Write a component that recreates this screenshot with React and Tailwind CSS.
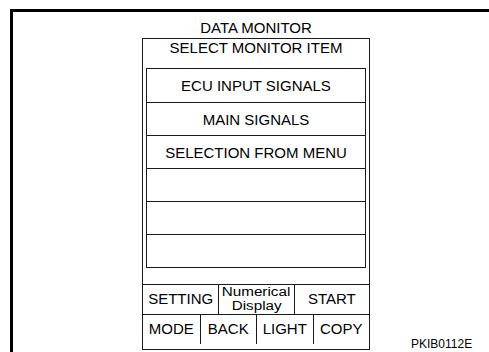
import React from 'react'

const LIST_ROWS = ['ECU INPUT SIGNALS', 'MAIN SIGNALS', 'SELECTION FROM MENU', '', '', '']

const App = () => {
  return (
    <div className="h-[352px] w-[489px] overflow-hidden bg-white pl-[10px] pt-[9px] font-['Liberation_Sans',Arial,sans-serif] text-black">
      <div className="flex h-full items-end border-l-[3px] border-t-[3px] border-black pb-[2px]">
        {/* monitor screen */}
        <div className="ml-[129px] w-[228px]">
          <div className="h-[26px] pt-[7px] text-center text-[15px] leading-[17px]">
            DATA MONITOR
          </div>
          <div className="h-[312px] border border-[#1a1a1a]">
            <div className="h-[29px] text-center text-[15px] leading-[17px]">
              SELECT MONITOR ITEM
            </div>
            <div className="mx-[3px] border border-[#1a1a1a]">
              {LIST_ROWS.map((label, i) => (
                <div
                  key={i}
                  className={`flex h-[33px] items-center justify-center text-[15px] leading-[17px] ${
                    i > 0 ? 'border-t border-[#1a1a1a]' : ''
                  }`}
                >
                  {label}
                </div>
              ))}
            </div>
            <div className="h-[16px]" />
            <div className="grid grid-cols-3 border-t border-[#1a1a1a] text-[15px]">
              <div className="flex h-[29px] items-center justify-center">SETTING</div>
              <div className="flex h-[29px] flex-col items-center justify-center border-l border-[#1a1a1a] text-[12px] leading-[13.5px]">
                <span className="scale-x-[1.27]">Numerical</span>
                <span className="scale-x-[1.27]">Display</span>
              </div>
              <div className="flex h-[29px] items-center justify-center border-l border-[#1a1a1a]">START</div>
            </div>
            <div className="grid grid-cols-4 border-t border-[#1a1a1a] text-[15px]">
              <div className="flex h-[29px] items-center justify-center">MODE</div>
              <div className="flex h-[29px] items-center justify-center border-l border-[#1a1a1a]">BACK</div>
              <div className="flex h-[29px] items-center justify-center border-l border-[#1a1a1a]">LIGHT</div>
              <div className="flex h-[29px] items-center justify-center border-l border-[#1a1a1a]">COPY</div>
            </div>
          </div>
        </div>
        <div className="ml-[41px] text-[12px] leading-[12px]">PKIB0112E</div>
      </div>
    </div>
  )
}

export default App
